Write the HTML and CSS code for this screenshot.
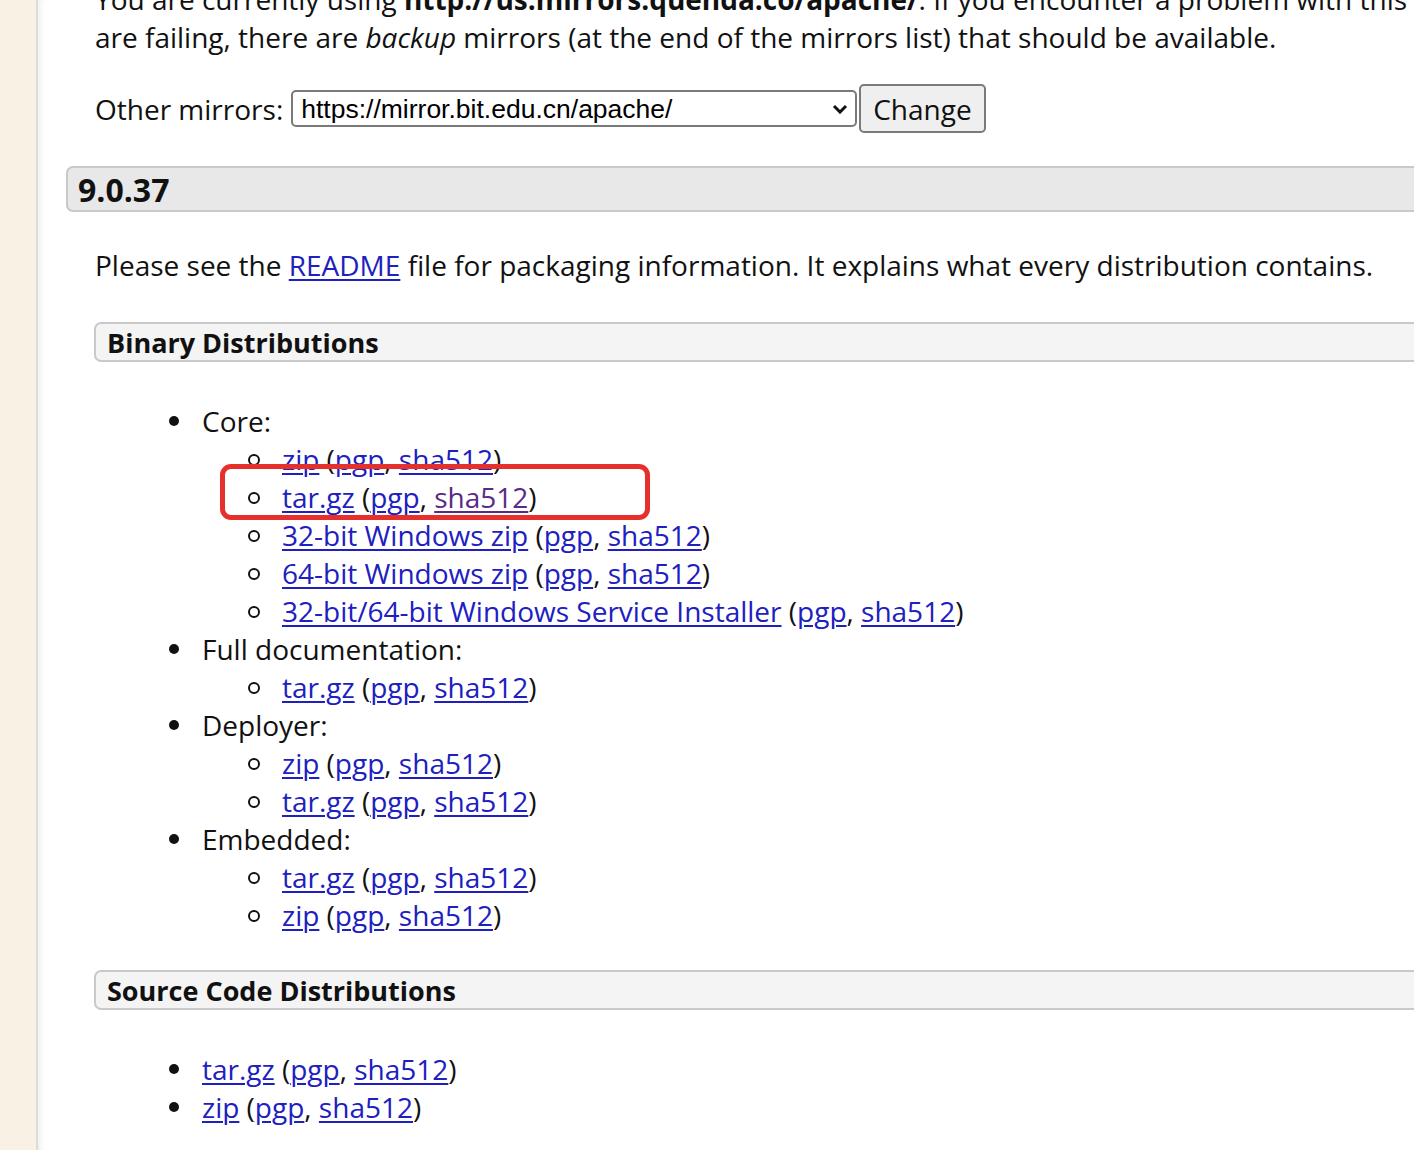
FILE: index.html
```html
<!DOCTYPE html>
<html lang="en">

<head>
  <meta charset="UTF-8">
  <title>Apache Tomcat 9 Downloads</title>
  <link rel="stylesheet" href="styles.css">
</head>

<body>
  <div class="page">
    <div class="side"></div>

    <div class="main">
      <p class="mirror-note">You are currently using <b>http://us.mirrors.quenda.co/apache/</b>. If you encounter a problem with this mirror, please select another mirror. If all mirrors<br>
        are failing, there are <i>backup</i> mirrors (at the end of the mirrors list) that should be available.</p>

      <form class="mirror-form">
        <label for="preferred">Other mirrors:</label>
        <span class="select-wrap">
          <select id="preferred">
            <option>https://mirror.bit.edu.cn/apache/</option>
          </select>
          <svg class="chevron" width="16" height="10" viewBox="0 0 16 10"><path d="M2 2 L8 8 L14 2" fill="none" stroke="#111" stroke-width="3"/></svg>
        </span><button type="button">Change</button>
      </form>

      <h3 class="version">9.0.37</h3>

      <div class="section-body">
        <p>Please see the <a href="#">README</a> file for packaging information. It explains what every distribution contains.</p>

        <h4 class="sub-heading">Binary Distributions</h4>
        <ul class="dist-list">
          <li>Core:
            <ul>
              <li><a href="#">zip</a> (<a href="#">pgp</a>, <a href="#">sha512</a>)</li>
              <li><a href="#">tar.gz</a> (<a href="#">pgp</a>, <a href="#" class="visited">sha512</a>)<span class="mark-box"></span></li>
              <li><a href="#">32-bit Windows zip</a> (<a href="#">pgp</a>, <a href="#">sha512</a>)</li>
              <li><a href="#">64-bit Windows zip</a> (<a href="#">pgp</a>, <a href="#">sha512</a>)</li>
              <li><a href="#">32-bit/64-bit Windows Service Installer</a> (<a href="#">pgp</a>, <a href="#">sha512</a>)</li>
            </ul>
          </li>
          <li>Full documentation:
            <ul>
              <li><a href="#">tar.gz</a> (<a href="#">pgp</a>, <a href="#">sha512</a>)</li>
            </ul>
          </li>
          <li>Deployer:
            <ul>
              <li><a href="#">zip</a> (<a href="#">pgp</a>, <a href="#">sha512</a>)</li>
              <li><a href="#">tar.gz</a> (<a href="#">pgp</a>, <a href="#">sha512</a>)</li>
            </ul>
          </li>
          <li>Embedded:
            <ul>
              <li><a href="#">tar.gz</a> (<a href="#">pgp</a>, <a href="#">sha512</a>)</li>
              <li><a href="#">zip</a> (<a href="#">pgp</a>, <a href="#">sha512</a>)</li>
            </ul>
          </li>
        </ul>

        <h4 class="sub-heading">Source Code Distributions</h4>
        <ul class="dist-list">
          <li><a href="#">tar.gz</a> (<a href="#">pgp</a>, <a href="#">sha512</a>)</li>
          <li><a href="#">zip</a> (<a href="#">pgp</a>, <a href="#">sha512</a>)</li>
        </ul>
      </div>
    </div>
  </div>
</body>

</html>
```
FILE: styles.css
```css
:root {
  --link-color: #2020c0;
  --visited-color: #5b2a86;
  --text-color: #111;
  --side-color: #f9f2e4;
  --box-border: #c9c9c9;
}

html,
body {
  margin: 0;
  height: 100%;
  overflow: hidden;
}

body {
  font-family: "Open Sans", "Noto Sans", sans-serif;
  font-size: 28px;
  line-height: 38px;
  color: var(--text-color);
  background-color: #fff;
}

.page {
  display: flex;
  min-height: 100%;
}

.side {
  flex: 0 0 36px;
  background-color: var(--side-color);
  border-right: 2px solid #dcdcdc;
}

.main {
  flex: 1;
  padding-left: 28px;
  margin-right: -40px;
  box-shadow: inset 6px 0 6px -4px rgba(0, 0, 0, 0.08);
}

a {
  color: var(--link-color);
  text-decoration: underline;
  text-underline-offset: 3px;
  text-decoration-thickness: 2px;
}

a.visited {
  color: var(--visited-color);
}

p {
  margin: 0;
}

.mirror-note {
  margin-top: -20px;
  padding-left: 29px;
  white-space: nowrap;
}

.mirror-form {
  display: flex;
  align-items: center;
  margin: 28px 0 0 29px;
}

.mirror-form label {
  margin-right: 8px;
}

.select-wrap {
  position: relative;
  display: flex;
}

.mirror-form select {
  appearance: none;
  font-family: "Liberation Sans", Arial, sans-serif;
  font-size: 26.5px;
  width: 566px;
  height: 37px;
  padding: 0 8px;
  border: 2px solid #7a7a7a;
  border-radius: 5px;
  background-color: #fff;
  color: #000;
}

.chevron {
  position: absolute;
  right: 9px;
  top: 14px;
  pointer-events: none;
}

.mirror-form button {
  font-family: "Open Sans", sans-serif;
  font-size: 28px;
  height: 49px;
  padding: 0 12px;
  margin-left: 2px;
  border: 2px solid #7a7a7a;
  border-radius: 5px;
  background-color: #efefef;
  color: #111;
}

.version {
  margin: 33px 0 0 0;
  padding: 0 10px;
  height: 42px;
  line-height: 44px;
  font-size: 32px;
  font-weight: 700;
  background-color: #e8e8e8;
  border: 2px solid var(--box-border);
  border-radius: 7px;
}

.section-body {
  padding-left: 29px;
  padding-top: 34px;
}

.sub-heading {
  margin: 38px 0 0 -1px;
  padding: 0 11px;
  height: 36px;
  line-height: 38px;
  font-size: 27px;
  font-weight: 700;
  background-color: #f4f4f4;
  border: 2px solid var(--box-border);
  border-radius: 7px;
}

.dist-list + .sub-heading {
  margin-top: 36px;
}

.dist-list {
  margin: 40px 0 0 0;
  padding-left: 107px;
  list-style: none;
}

.dist-list ul {
  margin: 0;
  padding-left: 80px;
  list-style: none;
}

.dist-list li {
  position: relative;
}

/* bullets: filled disc for top level, ring for nested items */
.dist-list li::before {
  content: "";
  position: absolute;
  left: -33px;
  top: 14px;
  width: 10px;
  height: 10px;
  border-radius: 50%;
  background-color: #111;
}

.dist-list ul li::before {
  left: -34px;
  width: 8px;
  height: 8px;
  top: 14px;
  background-color: transparent;
  border: 2px solid #111;
}

/* red highlight drawn over the tar.gz row */
.mark-box {
  position: absolute;
  left: -62px;
  top: -14px;
  width: 420px;
  height: 46px;
  border: 5px solid #e5302c;
  border-radius: 11px;
  pointer-events: none;
}
```
